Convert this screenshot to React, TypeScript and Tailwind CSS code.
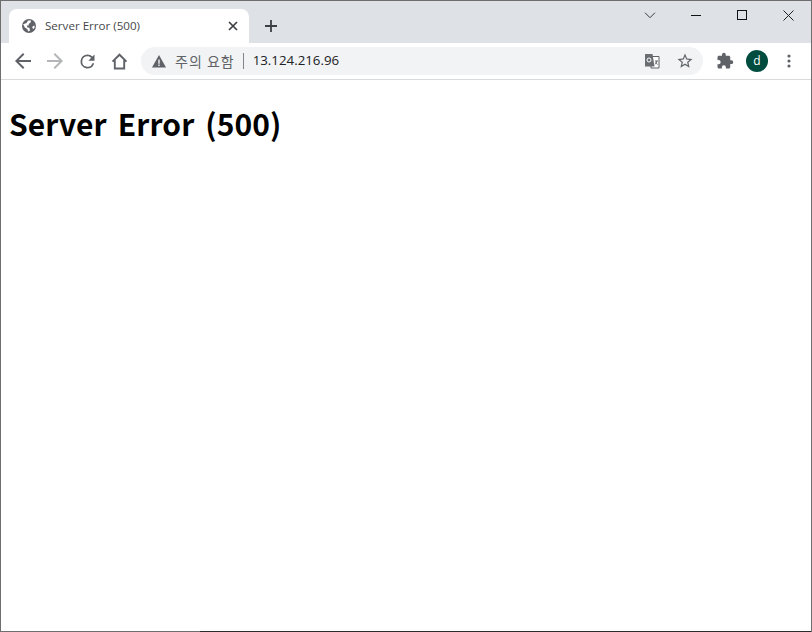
function Btn({ children, className = "" }: { children: React.ReactNode; className?: string }) {
  return <div className={`flex h-7 w-7 items-center justify-center ${className}`}>{children}</div>;
}

export default function App() {
  return (
    <div className="flex h-[632px] w-[812px] flex-col overflow-hidden border-x border-t border-[#6e6e6e] bg-white font-['Open_Sans','Noto_Sans_CJK_KR',sans-serif]">
      {/* tab strip */}
      <div className="flex h-[42px] shrink-0 items-end bg-[#dee1e6] pl-2">
        <div className="flex h-[34px] w-[240px] items-center rounded-t-lg bg-white pl-3 pr-[11px]">
          <svg width="16" height="16" viewBox="0 0 16 16" className="shrink-0">
            <circle cx="8" cy="8" r="7" fill="#5f6368" />
            <path d="M2.2 6.2 5.6 5 7 2.6 10 2.4 9.6 4.4 7.6 6 7.8 7.4 5.8 7.4 6.4 9.4 8.4 9.8 9 12.4 7.4 13.6 6.2 11 3.8 9.4Z M11.8 8.2 13.4 7.4 13.8 9.2 12.4 11 11.2 9.8Z" fill="#fff" />
          </svg>
          <span className="ml-2 flex-1 text-[11.6px] leading-none text-[#45474a]">Server Error (500)</span>
          <svg width="10" height="10" viewBox="0 0 10 10" className="shrink-0" stroke="#3c4043" strokeWidth="1.7" fill="none">
            <path d="M1 1 9 9M9 1 1 9" />
          </svg>
        </div>
        <svg width="12" height="12" viewBox="0 0 12 12" className="mb-[11px] ml-4 shrink-0" stroke="#3c4043" strokeWidth="1.8" fill="none">
          <path d="M6 0v12M0 6h12" />
        </svg>
        <div className="ml-auto flex self-start">
          <div className="flex h-7 w-[46px] items-center justify-center">
            <svg width="12" height="7" viewBox="0 0 12 7" stroke="#3a3a3a" fill="none"><path d="M1 .7 6 5.7 11 .7" /></svg>
          </div>
          <div className="flex h-7 w-[46px] items-center justify-center">
            <svg width="10" height="1" viewBox="0 0 10 1" fill="#111"><rect width="10" height="1" /></svg>
          </div>
          <div className="flex h-7 w-[46px] items-center justify-center">
            <svg width="10" height="10" viewBox="0 0 10 10" stroke="#111" fill="none"><rect x=".5" y=".5" width="9" height="9" /></svg>
          </div>
          <div className="flex h-7 w-[46px] items-center justify-center">
            <svg width="11" height="11" viewBox="0 0 11 11" stroke="#222" fill="none"><path d="M.5.5l10 10M10.5.5l-10 10" /></svg>
          </div>
        </div>
      </div>

      {/* toolbar */}
      <div className="flex h-[37px] shrink-0 items-center border-b border-[#d9dadc] bg-white pl-2 pr-2">
        <Btn>
          <svg width="16" height="16" viewBox="0 0 16 16" fill="#5f6368"><path d="M16 7H3.8l5.6-5.6L8 0 0 8l8 8 1.4-1.4L3.8 9H16z" /></svg>
        </Btn>
        <Btn className="ml-1">
          <svg width="16" height="16" viewBox="0 0 16 16" fill="#b3b5b8"><path d="M0 7h12.2L6.6 1.4 8 0l8 8-8 8-1.4-1.4L12.2 9H0z" /></svg>
        </Btn>
        <Btn className="ml-1">
          <svg width="21" height="21" viewBox="0 0 24 24" fill="#5f6368" className="shrink-0"><path d="M17.65 6.35A7.96 7.96 0 0 0 12 4a8 8 0 1 0 7.73 10h-2.08A6 6 0 1 1 12 6c1.66 0 3.14.69 4.22 1.78L13 11h7V4z" /></svg>
        </Btn>
        <Btn className="ml-1">
          <svg width="17" height="17" viewBox="0 0 17 17" fill="none" stroke="#5f6368" strokeWidth="1.9"><path d="M1.5 8.6 8.5 1.7l7 6.9M3.8 7v8.5h9.4V7" /></svg>
        </Btn>

        {/* omnibox */}
        <div className="ml-2 flex h-7 w-[562px] items-center rounded-full bg-[#f1f3f4] pl-[11px] pr-[10px]">
          <svg width="14" height="13" viewBox="0 0 14 13" className="shrink-0">
            <path d="M7 0 14 12.5H0Z" fill="#5f6368" />
            <path d="M6.3 4.5h1.4v4.2H6.3zM6.3 9.6h1.4V11H6.3z" fill="#f1f3f4" />
          </svg>
          <span className="ml-[9px] text-[14px] font-normal leading-none tracking-[1px] text-[#5f6368] font-['Noto_Sans_CJK_KR',sans-serif]">주의 요함</span>
          <span className="ml-2 h-4 w-px bg-[#80868b]" />
          <span className="ml-[9px] flex-1 text-[13.3px] leading-none text-[#202124]">13.124.216.96</span>
          <svg width="16" height="16" viewBox="0 0 16 16" className="mr-[17px] shrink-0">
            <path d="M7 3.5h8v11.5H7z" fill="#fff" stroke="#5f6368" />
            <path d="M1 1h7.5l2 12.5H1z" fill="#6a6e72" />
            <circle cx="5" cy="7" r="2" fill="none" stroke="#fff" />
            <path d="M11 8h3M12.8 8c-.2 1.6-1 2.8-2 3.4M11.6 9.5c.4.8 1.2 1.5 2 1.9" stroke="#5f6368" fill="none" />
          </svg>
          <svg width="18" height="18" viewBox="0 0 24 24" fill="#5f6368" className="-mx-px shrink-0">
            <path d="m22 9.24-7.19-.62L12 2 9.19 8.63 2 9.24l5.46 4.73L5.82 21 12 17.27 18.18 21l-1.63-7.03zM12 15.4l-3.76 2.27 1-4.28-3.32-2.88 4.38-.38L12 6.1l1.71 4.04 4.38.38-3.32 2.88 1 4.28z" />
          </svg>
        </div>

        <svg width="18" height="18" viewBox="0 0 24 24" fill="#5f6368" className="ml-[13px] shrink-0">
          <path d="M20.5 11H19V7c0-1.1-.9-2-2-2h-4V3.5a2.5 2.5 0 0 0-5 0V5H4c-1.1 0-2 .9-2 2v3.8h1.5a2.7 2.7 0 0 1 0 5.4H2V20c0 1.1.9 2 2 2h3.8v-1.5a2.7 2.7 0 0 1 5.4 0V22H17c1.1 0 2-.9 2-2v-4h1.5a2.5 2.5 0 0 0 0-5z" />
        </svg>
        <div className="ml-3 flex h-[22px] w-[22px] shrink-0 items-center justify-center rounded-full bg-[#004d40] text-xs leading-none text-white">d</div>
        <svg width="4" height="14" viewBox="0 0 4 14" fill="#5f6368" className="ml-[19px] shrink-0">
          <circle cx="2" cy="2" r="1.6" /><circle cx="2" cy="7" r="1.6" /><circle cx="2" cy="12" r="1.6" />
        </svg>
      </div>

      {/* page */}
      <div className="flex-1 bg-white px-2 pt-5">
        <h1 className="text-[30px] font-bold leading-[46px] tracking-[0.1px] [word-spacing:4px] text-black font-['Noto_Sans_CJK_KR',sans-serif]">Server Error (500)</h1>
      </div>
      <div className="flex h-px shrink-0">
        <div className="w-[199px] bg-[#6e6e6e]" />
        <div className="flex-1 bg-[#2b2b2b]" />
      </div>
    </div>
  );
}
